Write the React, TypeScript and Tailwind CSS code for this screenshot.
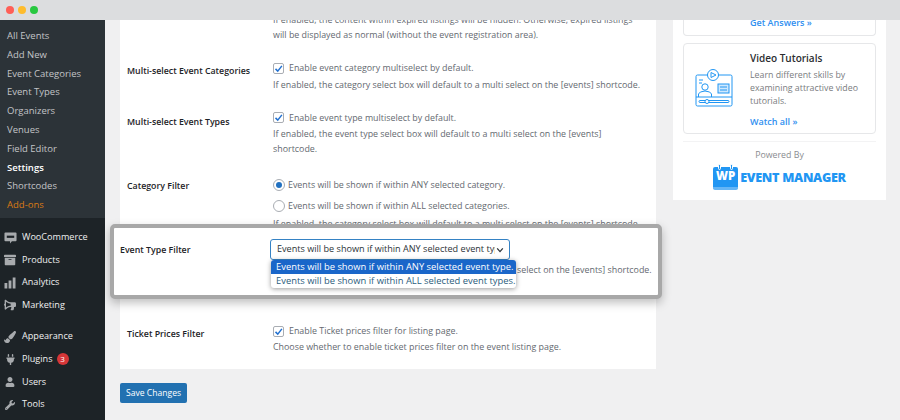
import React from "react";
import { FaArchive, FaBullhorn, FaPaintBrush, FaPlug, FaUser, FaWrench } from "react-icons/fa";

const subMenu = ["All Events", "Add New", "Event Categories", "Event Types", "Organizers", "Venues", "Field Editor"];

function Check() {
  return (
    <span className="flex h-[11px] w-[11px] shrink-0 items-center justify-center rounded-[2px] border border-[#a9adb3] bg-white">
      <svg viewBox="0 0 12 12" className="h-[9px] w-[9px]">
        <path d="M2 6.5 L5 9.5 L10.5 2.5" fill="none" stroke="#2271d1" strokeWidth="2" />
      </svg>
    </span>
  );
}

function Radio({ on }: { on?: boolean }) {
  return (
    <span className="flex h-[12px] w-[12px] shrink-0 items-center justify-center rounded-full border border-[#a9adb3] bg-white">
      {on && <span className="h-[6px] w-[6px] rounded-full bg-[#2271c1]" />}
    </span>
  );
}

function Row({ label, className, labelClass, children }: { label: string; className?: string; labelClass?: string; children: React.ReactNode }) {
  return (
    <div className={`flex ${className ?? ""}`}>
      <div className={`w-[146px] shrink-0 text-[8.8px] font-semibold text-[#1d2327] ${labelClass ?? ""}`}>{label}</div>
      <div className="flex-1 whitespace-nowrap text-[#646970]">{children}</div>
    </div>
  );
}

function MainItem({ icon, label, badge, className }: { icon: React.ReactNode; label: string; badge?: string; className?: string }) {
  return (
    <div className={`flex h-[22.7px] items-center text-[9.1px] text-[#f0f0f1] ${className ?? ""}`}>
      <span className="flex w-[20px] justify-center text-[#a7aaad]">{icon}</span>
      <span className="ml-[2px]">{label}</span>
      {badge && (
        <span className="ml-[4px] flex h-[12px] w-[12px] items-center justify-center rounded-full bg-[#d63638] text-[8px] text-white">{badge}</span>
      )}
    </div>
  );
}

function VideoIcon() {
  return (
    <svg viewBox="0 0 38 40" className="h-[40px] w-[38px]" fill="none" stroke="#2196f3" strokeWidth="1">
      <rect x="1" y="7" width="36" height="31" rx="1.5" />
      <line x1="1" y1="29" x2="37" y2="29" />
      <circle cx="18" cy="7" r="5.5" fill="white" />
      <path d="M16 4.5 L21 7 L16 9.5 Z" />
      <circle cx="10" cy="19" r="3.2" />
      <path d="M3.5 29 V26 Q4 23.5 10 23 Q16 23.5 16.5 26 V29" />
      <rect x="23" y="16" width="11" height="9" fill="#cfe8fd" />
      <line x1="25" y1="19" x2="32" y2="19" />
      <line x1="25" y1="22" x2="32" y2="22" />
      <rect x="4" y="32.5" width="30" height="2" rx="1" />
      <circle cx="12" cy="33.5" r="2" fill="white" />
      <line x1="4" y1="12" x2="8" y2="12" />
      <line x1="4" y1="15" x2="7" y2="15" />
    </svg>
  );
}

function App() {
  return (
    <div className="flex h-[420px] w-[900px] flex-col overflow-hidden bg-[#f0f0f1] font-['Open_Sans','Noto_Sans',sans-serif] text-[8.9px] leading-[14.5px]">
      <div className="relative z-10 flex h-[20px] shrink-0 items-center gap-[4px] bg-[#dcdddf] pl-[6px]">
        <span className="h-[8px] w-[8px] rounded-full bg-[#ff5f57]" />
        <span className="h-[8px] w-[8px] rounded-full bg-[#febc2e]" />
        <span className="h-[8px] w-[8px] rounded-full bg-[#28c840]" />
      </div>
      <div className="relative flex min-h-0 flex-1">
        <aside className="flex w-[105px] shrink-0 flex-col bg-[#1d2327]">
          <div className="flex h-[198px] flex-col bg-[#2c3338] pl-[7px] pt-[7px] text-[9.5px] text-[#c3c4c7]">
            {subMenu.map((item) => (
              <div key={item} className="h-[18.8px] leading-[18px]">{item}</div>
            ))}
            <div className="h-[18.8px] font-semibold leading-[18px] text-white">Settings</div>
            <div className="h-[18.8px] leading-[18px]">Shortcodes</div>
            <div className="h-[18.8px] leading-[18px] text-[#d97a14]">Add-ons</div>
          </div>
          <div className="pt-[8px]">
            <MainItem
              label="WooCommerce"
              icon={
                <svg viewBox="0 0 14 14" className="h-[13px] w-[13px]">
                  <path d="M1.5 1.5 H12.5 A1 1 0 0 1 13.5 2.5 V10 A1 1 0 0 1 12.5 11 H8.5 L6.5 13.5 V11 H1.5 A1 1 0 0 1 0.5 10 V2.5 A1 1 0 0 1 1.5 1.5 Z" fill="#a7aaad" />
                  <rect x="3" y="5" width="8" height="2.4" fill="#1d2327" />
                </svg>
              }
            />
            <MainItem label="Products" icon={<FaArchive size={12} />} />
            <MainItem
              label="Analytics"
              icon={
                <svg viewBox="0 0 12 12" className="h-[12px] w-[12px]" fill="#a7aaad">
                  <rect x="0.5" y="6" width="2.8" height="5.5" />
                  <rect x="4.6" y="3.5" width="2.8" height="8" />
                  <rect x="8.7" y="0.5" width="2.8" height="11" />
                </svg>
              }
            />
            <MainItem label="Marketing" icon={<FaBullhorn size={12} className="-scale-x-100" />} />
            <MainItem label="Appearance" className="mt-[8.5px]" icon={<FaPaintBrush size={12} />} />
            <MainItem label="Plugins" badge="3" icon={<FaPlug size={11} />} />
            <MainItem label="Users" icon={<FaUser size={10} />} />
            <MainItem label="Tools" icon={<FaWrench size={10} />} />
          </div>
        </aside>

        <main className="flex min-w-0 flex-1 items-start gap-[17px] pl-[15px]">
          <div className="w-[536px] shrink-0">
            <div className="h-[349px] overflow-hidden bg-white pl-[7px]">
              <div className="-mt-[7px] whitespace-nowrap pl-[146px] text-[#646970]">
                <p>If enabled, the content within expired listings will be hidden. Otherwise, expired listings</p>
                <p>will be displayed as normal (without the event registration area).</p>
              </div>
              <Row label="Multi-select Event Categories" className="mt-[19px]" labelClass="pt-[3px]">
                <label className="flex items-center gap-[5px]"><Check /> Enable event category multiselect by default.</label>
                <p className="mt-[2px]">If enabled, the category select box will default to a multi select on the [events] shortcode.</p>
              </Row>
              <Row label="Multi-select Event Types" className="mt-[18.5px]" labelClass="pt-[4px]">
                <label className="flex items-center gap-[5px]"><Check /> Enable event type multiselect by default.</label>
                <p className="mt-[2px]">If enabled, the event type select box will default to a multi select on the [events]<br />shortcode.</p>
              </Row>
              <Row label="Category Filter" className="mt-[22px]" labelClass="pt-[1px]">
                <label className="flex items-center gap-[3px]"><Radio on /> Events will be shown if within ANY selected category.</label>
                <label className="mt-[6.5px] flex items-center gap-[3px]"><Radio /> Events will be shown if within ALL selected categories.</label>
                <p className="mt-[3px]">If enabled, the category select box will default to a multi select on the [events] shortcode.</p>
              </Row>
              <Row label="Ticket Prices Filter" className="mt-[93px]" labelClass="pt-[3px]">
                <label className="flex items-center gap-[5px]"><Check /> Enable Ticket prices filter for listing page.</label>
                <p className="mt-[1.5px]">Choose whether to enable ticket prices filter on the event listing page.</p>
              </Row>
            </div>
            <button className="mt-[14px] h-[20px] w-[67px] rounded-[2px] bg-[#2271b1] text-[8.6px] text-white">Save Changes</button>
          </div>

          <div className="h-[180px] w-[213px] shrink-0 bg-white px-[10px]">
            <div className="h-[16px] rounded-b-[4px] border border-t-0 border-[#e6e7e9] pl-[66px] text-[9px] font-semibold leading-[6px] text-[#2f8ff0]">
              Get Answers »
            </div>
            <div className="mt-[7px] flex h-[91px] rounded-[4px] border border-[#e6e7e9] pl-[11px] pt-[7px]">
              <div className="w-[55px] shrink-0 pt-[17px]"><VideoIcon /></div>
              <div>
                <p className="text-[10px] font-semibold text-[#2b2d30]">Video Tutorials</p>
                <p className="mt-[3px] text-[8.8px] leading-[13px] text-[#7a7c80]">Learn different skills by examining attractive video tutorials.</p>
                <p className="mt-[7px] text-[9px] font-semibold text-[#2f8ff0]">Watch all »</p>
              </div>
            </div>
            <div className="mt-[7px] border-t border-[#f3f3f4] pt-[6px] text-center text-[8.8px] text-[#8a8c90]">Powered By</div>
            <div className="mt-[1px] flex items-center justify-center gap-[2px]">
              <span className="relative mt-[3px] flex h-[23px] w-[25px] items-center justify-center rounded-[2px] border-b-[3px] border-b-[#64b5f6] bg-[#2196f3] text-[11.5px] font-extrabold text-white">
                WP
                <span className="absolute -top-[3px] left-[5px] h-[6px] w-[3px] rounded-full border border-white bg-[#2196f3]" />
                <span className="absolute -top-[3px] right-[5px] h-[6px] w-[3px] rounded-full border border-white bg-[#2196f3]" />
              </span>
              <span className="mt-[3px] text-[12.6px] font-extrabold tracking-[-0.3px] text-[#2196f3]">EVENT MANAGER</span>
            </div>
          </div>
        </main>

        <div className="absolute left-[110px] top-[204px] flex h-[75px] w-[552px] rounded-[5px] border-[4px] border-[#a8a8a8] bg-white pl-[6px] pt-[11px] shadow-[0_4px_10px_rgba(0,0,0,0.25)]">
          <div className="w-[150px] shrink-0 pt-[4px] text-[8.8px] font-semibold text-[#1d2327]">Event Type Filter</div>
          <div className="relative">
            <div className="flex h-[21px] w-[240px] items-center justify-between rounded-[3px] border border-[#3582c4] pl-[6px] pr-[5px] text-[9.1px] text-[#2c3338]">
              <span className="w-[218px] overflow-hidden whitespace-nowrap">Events will be shown if within ANY selected event type.</span>
              <svg viewBox="0 0 10 10" className="h-[8px] w-[8px]"><path d="M1.5 3 L5 7 L8.5 3" fill="none" stroke="#2c3338" strokeWidth="1.6" /></svg>
            </div>
            <p className="absolute left-[247px] top-[24px] whitespace-nowrap text-[#646970]">select on the [events] shortcode.</p>
            <div className="absolute left-[1px] top-[21px] w-[245px] overflow-hidden rounded-[3px] bg-white text-[9.4px] text-[#2c5d7d] shadow-[0_1px_5px_rgba(0,0,0,0.4)]">
              <div className="h-[14px] whitespace-nowrap bg-[#1a66c9] pl-[5px] leading-[14px] text-white">Events will be shown if within ANY selected event type.</div>
              <div className="h-[14px] whitespace-nowrap pl-[5px] leading-[14px]">Events will be shown if within ALL selected event types.</div>
            </div>
          </div>
        </div>
      </div>
    </div>
  );
}

export default App;
